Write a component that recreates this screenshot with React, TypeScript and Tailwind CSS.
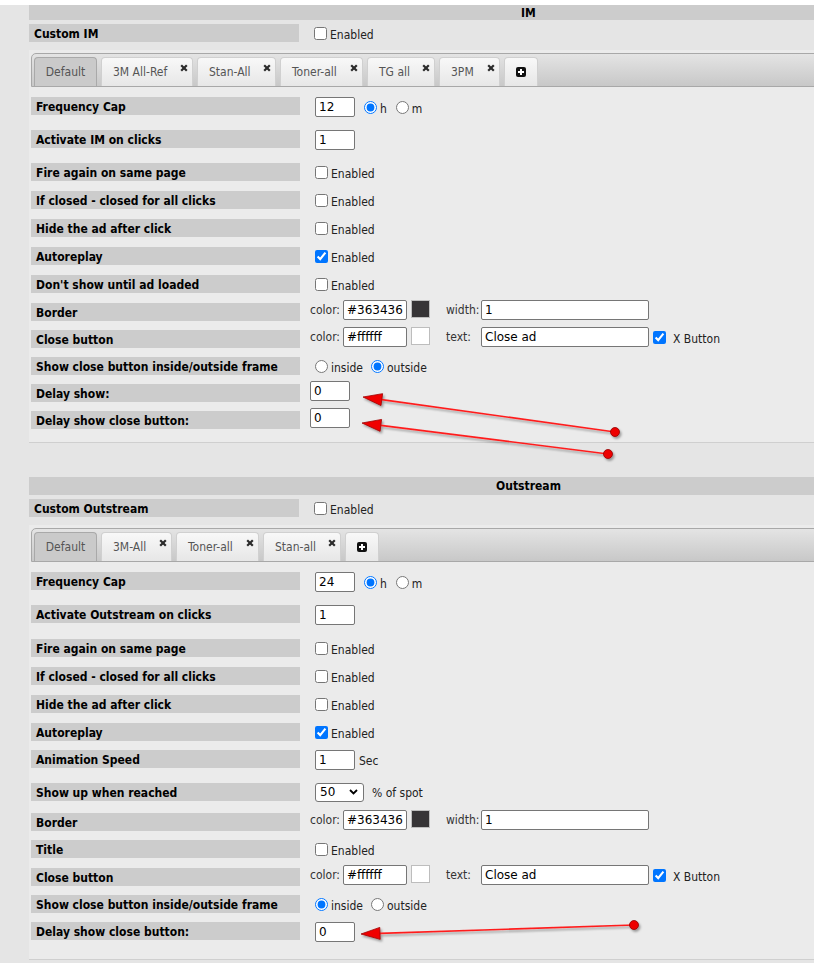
import React from "react";

const sans = "font-[family-name:'DejaVu_Sans_Condensed','Liberation_Sans',sans-serif]";
const field = "font-[family-name:'DejaVu_Sans','Liberation_Sans',sans-serif]";

type Tab = { label: string; w: string; active?: boolean };

const imTabs: Tab[] = [
  { label: "Default", w: "w-[63px]", active: true },
  { label: "3M All-Ref", w: "w-[92px]" },
  { label: "Stan-All", w: "w-[79px]" },
  { label: "Toner-all", w: "w-[83px]" },
  { label: "TG all", w: "w-[68px]" },
  { label: "3PM", w: "w-[61px]" },
];

const outstreamTabs: Tab[] = [
  { label: "Default", w: "w-[63px]", active: true },
  { label: "3M-All", w: "w-[71px]" },
  { label: "Toner-all", w: "w-[83px]" },
  { label: "Stan-all", w: "w-[78px]" },
];

const arrows = [
  { x1: 615, y1: 432, x2: 363, y2: 397 },
  { x1: 608, y1: 454, x2: 362, y2: 423 },
  { x1: 634, y1: 925, x2: 361, y2: 934 },
];

function CloseX() {
  return (
    <svg width="8" height="8" viewBox="0 0 8 8" className="mt-[6px] shrink-0 self-start">
      <path d="M1.2 1.2L6.8 6.8M6.8 1.2L1.2 6.8" stroke="#2b2b2b" strokeWidth="2.2" />
    </svg>
  );
}

function PlusIcon() {
  return (
    <svg width="10" height="10" viewBox="0 0 10 10">
      <rect width="10" height="10" rx="2" fill="#111" />
      <path d="M5 2v6M2 5h6" stroke="#fff" strokeWidth="2" />
    </svg>
  );
}

function TabBar({ tabs }: { tabs: Tab[] }) {
  return (
    <div className="flex h-[34px] items-end gap-[4px] rounded-tl-[5px] border border-[#a8a8a8] bg-linear-to-b from-[#e4e4e4] to-[#c8c8c8] pl-[2px]">
      {tabs.map((t) =>
        t.active ? (
          <div
            key={t.label}
            className={`flex h-[29px] ${t.w} items-center justify-center rounded-t-[4px] border border-b-0 border-[#a9a9a9] bg-[#cacaca] text-[12px] text-[#555]`}
          >
            {t.label}
          </div>
        ) : (
          <div
            key={t.label}
            className={`flex h-[29px] ${t.w} items-center justify-between rounded-t-[4px] border border-b-0 border-[#d0d0d0] bg-linear-to-b from-[#f8f8f8] to-[#e7e7e7] pl-[11px] pr-[4px] text-[12px] text-[#555]`}
          >
            <span>{t.label}</span>
            <CloseX />
          </div>
        )
      )}
      <div className="flex h-[29px] w-[34px] items-center justify-center rounded-t-[4px] border border-b-0 border-[#d0d0d0] bg-linear-to-b from-[#f8f8f8] to-[#e7e7e7]">
        <PlusIcon />
      </div>
    </div>
  );
}

function Row({ label, h, right = "h-[18px]", children }: { label: string; h: string; right?: string; children?: React.ReactNode }) {
  return (
    <div className={`flex items-start ${h}`}>
      <div className="flex h-[18px] w-[269px] shrink-0 items-center bg-[#cccccc] pl-[5px] pt-[1px] text-[12px] font-bold text-black">
        {label}
      </div>
      <div className={`ml-[10px] flex items-center text-[12px] text-[#222] ${right}`}>{children}</div>
    </div>
  );
}

function Check({ checked = false, text = "Enabled", cls = "ml-[5px]" }: { checked?: boolean; text?: string; cls?: string }) {
  return (
    <label className={`flex items-center text-[12px] text-[#222] ${cls}`}>
      <input type="checkbox" defaultChecked={checked} className="m-0 h-[13px] w-[13px]" />
      <span className="ml-[3px] pt-[3px]">{text}</span>
    </label>
  );
}

function Radio({ name, checked = false, text, cls }: { name: string; checked?: boolean; text: string; cls: string }) {
  return (
    <label className={`flex items-center ${cls}`}>
      <input type="radio" name={name} defaultChecked={checked} className="m-0 h-[13px] w-[13px]" />
      <span className="ml-[3px] pt-[3px]">{text}</span>
    </label>
  );
}

function Field({ value, w, cls = "" }: { value: string; w: string; cls?: string }) {
  return (
    <input
      readOnly
      defaultValue={value}
      className={`h-[20px] ${w} rounded-[2px] border border-[#767676] bg-white px-[3px] text-[12px] text-black ${field} ${cls}`}
    />
  );
}

function ColorPart({ value, swatch }: { value: string; swatch: string }) {
  return (
    <>
      <span className="w-[33px] text-[#333]">color:</span>
      <Field value={value} w="w-[64px]" />
      <div className={`ml-[4px] h-[18px] w-[19px] self-start border border-[#bdbdbd] ${swatch}`} />
    </>
  );
}

function Section({ title, headerH, custom, tabs, children }: { title: string; headerH: string; custom: string; tabs: Tab[]; children: React.ReactNode }) {
  return (
    <div className="w-[999px]">
      <div className={`flex ${headerH} items-center justify-center bg-[#cccccc] text-[12px] font-bold text-black`}>{title}</div>
      <div className="mt-[4px] flex h-[18px] items-center">
        <div className="flex h-[18px] w-[270px] items-center bg-[#cccccc] pl-[5px] pt-[1px] text-[12px] font-bold text-black">
          {custom}
        </div>
        <Check cls="ml-[15px]" />
      </div>
      <div className="mt-[8px] border-b border-[#cfcfcf] bg-[#ebebeb] pl-[2px] pt-[3px]">
        <TabBar tabs={tabs} />
        <div className="pt-[10px]">{children}</div>
      </div>
    </div>
  );
}

function Annotations() {
  return (
    <svg className="pointer-events-none absolute left-0 top-0" width="814" height="963">
      <defs>
        <filter id="shadow" x="-10%" y="-60%" width="120%" height="220%">
          <feDropShadow dx="1.5" dy="2" stdDeviation="1.2" floodColor="#000" floodOpacity="0.35" />
        </filter>
      </defs>
      {arrows.map((a, i) => {
        const dx = a.x2 - a.x1;
        const dy = a.y2 - a.y1;
        const len = Math.hypot(dx, dy);
        const ux = dx / len;
        const uy = dy / len;
        const bx = a.x2 - ux * 19;
        const by = a.y2 - uy * 19;
        const nx = -uy * 6;
        const ny = ux * 6;
        const pts = `${a.x2},${a.y2} ${bx + nx},${by + ny} ${bx - nx},${by - ny}`;
        return (
          <g key={i} filter="url(#shadow)">
            <line x1={a.x1} y1={a.y1} x2={bx} y2={by} stroke="#ff1f1f" strokeWidth="1.6" />
            <polygon points={pts} fill="#f00000" stroke="#a00000" strokeWidth="0.8" strokeLinejoin="round" />
            <circle cx={a.x1} cy={a.y1} r="4.5" fill="#ee0000" stroke="#900000" strokeWidth="0.8" />
          </g>
        );
      })}
    </svg>
  );
}

export default function App() {
  return (
    <div className={`relative h-[963px] w-[814px] overflow-hidden bg-[#e5e5e5] ${sans}`}>
      <div className="h-[5px] bg-white" />
      <div className="pl-[29px]">
        {/* IM */}
        <Section title="IM" headerH="h-[15px]" custom="Custom IM" tabs={imTabs}>
          <Row label="Frequency Cap" h="h-[33px]" right="h-[20px]">
            <Field value="12" w="w-[40px]" cls="ml-[5px]" />
            <Radio name="im-freq" checked text="h" cls="ml-[9px]" />
            <Radio name="im-freq" text="m" cls="ml-[9px]" />
          </Row>
          <Row label="Activate IM on clicks" h="h-[33px]" right="h-[20px]">
            <Field value="1" w="w-[40px]" cls="ml-[5px]" />
          </Row>
          <Row label="Fire again on same page" h="h-[28px]">
            <Check />
          </Row>
          <Row label="If closed - closed for all clicks" h="h-[28px]">
            <Check />
          </Row>
          <Row label="Hide the ad after click" h="h-[28px]">
            <Check />
          </Row>
          <Row label="Autoreplay" h="h-[28px]">
            <Check checked />
          </Row>
          <Row label="Don't show until ad loaded" h="h-[28px]">
            <Check />
          </Row>
          <Row label="Border" h="h-[27px]" right="h-[20px] -mt-[3px]">
            <ColorPart value="#363436" swatch="bg-[#363436]" />
            <span className="ml-[16px] w-[35px] text-[#333]">width:</span>
            <Field value="1" w="w-[168px]" />
          </Row>
          <Row label="Close button" h="h-[27px]" right="h-[20px] -mt-[3px]">
            <ColorPart value="#ffffff" swatch="bg-white" />
            <span className="ml-[16px] w-[35px] text-[#333]">text:</span>
            <Field value="Close ad" w="w-[168px]" />
            <Check checked text="X Button" cls="ml-[4px] [&>span]:ml-[7px]" />
          </Row>
          <Row label="Show close button inside/outside frame" h="h-[27px]">
            <Radio name="im-pos" text="inside" cls="ml-[5px]" />
            <Radio name="im-pos" checked text="outside" cls="ml-[8px]" />
          </Row>
          <Row label="Delay show:" h="h-[27px]" right="h-[20px] -mt-[3px]">
            <Field value="0" w="w-[40px]" />
          </Row>
          <Row label="Delay show close button:" h="h-[31px]" right="h-[20px] -mt-[3px]">
            <Field value="0" w="w-[40px]" />
          </Row>
        </Section>

        {/* Outstream */}
        <div className="mt-[34px]">
          <Section title="Outstream" headerH="h-[18px]" custom="Custom Outstream" tabs={outstreamTabs}>
            <Row label="Frequency Cap" h="h-[33px]" right="h-[20px]">
              <Field value="24" w="w-[40px]" cls="ml-[5px]" />
              <Radio name="os-freq" checked text="h" cls="ml-[9px]" />
              <Radio name="os-freq" text="m" cls="ml-[9px]" />
            </Row>
            <Row label="Activate Outstream on clicks" h="h-[34px]" right="h-[20px]">
              <Field value="1" w="w-[40px]" cls="ml-[5px]" />
            </Row>
            <Row label="Fire again on same page" h="h-[28px]">
              <Check />
            </Row>
            <Row label="If closed - closed for all clicks" h="h-[28px]">
              <Check />
            </Row>
            <Row label="Hide the ad after click" h="h-[28px]">
              <Check />
            </Row>
            <Row label="Autoreplay" h="h-[27px]">
              <Check checked />
            </Row>
            <Row label="Animation Speed" h="h-[33px]" right="h-[20px]">
              <Field value="1" w="w-[40px]" cls="ml-[5px]" />
              <span className="ml-[4px] pt-[1px]">Sec</span>
            </Row>
            <Row label="Show up when reached" h="h-[30px]" right="h-[20px] -mt-[1px]">
              <div
                className={`ml-[5px] flex h-[19px] w-[49px] items-center justify-between rounded-[3px] border border-[#767676] bg-white pl-[4px] pr-[5px] text-[12px] text-black ${field}`}
              >
                50
                <svg width="9" height="6" viewBox="0 0 9 6">
                  <path d="M1 1l3.5 3.5L8 1" fill="none" stroke="#000" strokeWidth="1.8" />
                </svg>
              </div>
              <span className="ml-[8px] pt-[1px]">% of spot</span>
            </Row>
            <Row label="Border" h="h-[27px]" right="h-[20px] -mt-[3px]">
              <ColorPart value="#363436" swatch="bg-[#363436]" />
              <span className="ml-[16px] w-[35px] text-[#333]">width:</span>
              <Field value="1" w="w-[168px]" />
            </Row>
            <Row label="Title" h="h-[28px]">
              <Check />
            </Row>
            <Row label="Close button" h="h-[27px]" right="h-[20px] -mt-[3px]">
              <ColorPart value="#ffffff" swatch="bg-white" />
              <span className="ml-[16px] w-[35px] text-[#333]">text:</span>
              <Field value="Close ad" w="w-[168px]" />
              <Check checked text="X Button" cls="ml-[4px] [&>span]:ml-[7px]" />
            </Row>
            <Row label="Show close button inside/outside frame" h="h-[27px]">
              <Radio name="os-pos" checked text="inside" cls="ml-[5px]" />
              <Radio name="os-pos" text="outside" cls="ml-[8px]" />
            </Row>
            <Row label="Delay show close button:" h="h-[37px]" right="h-[20px]">
              <Field value="0" w="w-[40px]" cls="ml-[5px]" />
            </Row>
          </Section>
        </div>
      </div>
      <Annotations />
    </div>
  );
}
